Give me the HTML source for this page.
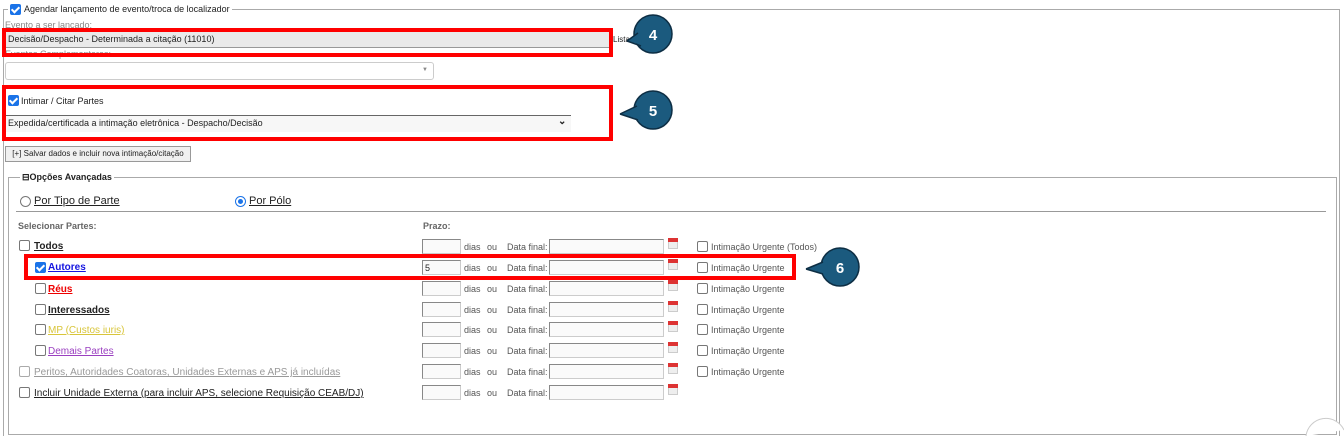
<!DOCTYPE html><html><head><meta charset="utf-8"><style>
html,body{margin:0;width:1344px;height:436px;overflow:hidden}
body{background:#fff;position:relative;font-family:"Liberation Sans",Arial,sans-serif;font-size:9px;color:#222}
.a{position:absolute;white-space:nowrap}
.cb{position:absolute;width:9px;height:9px;border:1px solid #777;border-radius:2px;background:#fff}
.cbk{position:absolute;width:11px;height:11px;border-radius:2px;background:#1a73e8}
.cbk:after{content:"";position:absolute;left:3px;top:1px;width:3px;height:6px;border:solid #fff;border-width:0 2px 2px 0;transform:rotate(45deg)}
.in{position:absolute;height:15px;border:1px solid #ccc;border-top-color:#888;border-left-color:#888;background:#fafafa;box-sizing:border-box}
.red{position:absolute;border:4px solid #f00;box-sizing:border-box}
.cal{position:absolute;width:10px;height:11px;background:#eee;border:1px solid #ccc;box-sizing:border-box}
.cal:before{content:"";position:absolute;left:-1px;top:-1px;width:10px;height:4px;background:#d33}
.g{color:#555}
.u{text-decoration:underline;font-weight:bold;font-size:10px}
</style></head><body>
<div class="a" style="left:3px;top:9px;width:1337px;height:427px;border:1px solid #aaa;border-bottom:none;box-sizing:border-box"></div>
<div class="a" style="left:8px;top:3px;background:#fff;padding:0 2px;width:220px;height:12px"></div>
<div class="cbk" style="left:10px;top:4px"></div>
<div class="a" style="left:24px;top:4px;font-size:9px">Agendar lançamento de evento/troca de localizador</div>
<div class="a" style="left:5px;top:20px;color:#888">Evento a ser lançado:</div>
<div class="a" style="left:5px;top:49px;color:#888">Eventos Complementares:</div>
<div class="in" style="left:5px;top:31px;width:605px;height:17px;background:#eaeaea;border-color:#999"></div>
<div class="a" style="left:8px;top:34px">Decisão/Despacho - Determinada a citação (11010)</div>
<div class="a" style="left:613px;top:35px;font-size:8px">Listar</div>
<div class="in" style="left:5px;top:62px;width:429px;height:18px;background:#fff;border:1px solid #ccc;border-radius:3px"></div>
<div class="a" style="left:422px;top:67px;color:#888;font-size:6px">▼</div>
<div class="cbk" style="left:8px;top:95px"></div>
<div class="a" style="left:21px;top:96px">Intimar / Citar Partes</div>
<div class="a" style="left:5px;top:115px;width:566px;height:16px;border-top:1px solid #666;background:#f7f7f7"></div>
<div class="a" style="left:8px;top:118px">Expedida/certificada a intimação eletrônica - Despacho/Decisão</div>
<div class="a" style="left:558px;top:116px;font-size:10px;font-weight:bold">⌄</div>
<div class="a" style="left:5px;top:146px;width:184px;height:14px;border:1px solid #999;background:#f0f0f0;font-size:8px;line-height:14px;text-align:center">[+] Salvar dados e incluir nova intimação/citação</div>
<div class="a" style="left:8px;top:177px;width:1329px;height:258px;border:1px solid #aaa;box-sizing:border-box"></div>
<div class="a" style="left:20px;top:172px;background:#fff;padding:0 2px;font-weight:bold;font-size:9px">⊟Opções Avançadas</div>
<div class="a" style="left:20px;top:196px;width:9px;height:9px;border:1px solid #777;border-radius:50%"></div>
<div class="a" style="left:34px;top:195px;font-size:11px;text-decoration:underline">Por Tipo de Parte</div>
<div class="a" style="left:235px;top:196px;width:9px;height:9px;border:1px solid #1a73e8;border-radius:50%"></div>
<div class="a" style="left:238px;top:199px;width:5px;height:5px;background:#1a73e8;border-radius:50%"></div>
<div class="a" style="left:249px;top:195px;font-size:11px;text-decoration:underline">Por Pólo</div>
<div class="a" style="left:16px;top:211px;width:1310px;border-top:1px solid #999"></div>
<div class="a g" style="left:18px;top:221px;font-weight:bold;color:#666">Selecionar Partes:</div>
<div class="a" style="left:423px;top:221px;font-weight:bold;color:#666">Prazo:</div>
<div class="cb" style="left:19px;top:240px"></div><div class="a u" style="left:34px;top:241px;color:#222">Todos</div>
<div class="cbk" style="left:35px;top:262px"></div><div class="a u" style="left:48px;top:262px;color:#1515e0">Autores</div>
<div class="cb" style="left:35px;top:283px"></div><div class="a u" style="left:48px;top:284px;color:#e00">Réus</div>
<div class="cb" style="left:35px;top:304px"></div><div class="a u" style="left:48px;top:305px;color:#222">Interessados</div>
<div class="cb" style="left:35px;top:324px"></div><div class="a u" style="left:48px;top:325px;color:#d8c53a;font-weight:normal">MP (Custos iuris)</div>
<div class="cb" style="left:35px;top:345px"></div><div class="a u" style="left:48px;top:346px;color:#9a3fc0;font-weight:normal">Demais Partes</div>
<div class="cb" style="left:19px;top:366px;border-color:#aaa"></div><div class="a u" style="left:34px;top:367px;color:#999;font-weight:normal">Peritos, Autoridades Coatoras, Unidades Externas e APS já incluídas</div>
<div class="cb" style="left:19px;top:387px"></div><div class="a u" style="left:34px;top:388px;color:#222;font-weight:normal">Incluir Unidade Externa (para incluir APS, selecione Requisição CEAB/DJ)</div>
<div id="rows"></div>
<script>
var ys=[239,260,281,302,322,343,364,385],h="";
ys.forEach(function(y,i){h+='<div class="in" style="left:422px;top:'+y+'px;width:39px"></div>'+(i==1?'<div class="a" style="left:425px;top:'+(y+3)+'px">5</div>':'')+
'<div class="a g" style="left:464px;top:'+(y+3)+'px">dias</div><div class="a g" style="left:487px;top:'+(y+3)+'px">ou</div><div class="a g" style="left:507px;top:'+(y+3)+'px">Data final:</div>'+
'<div class="in" style="left:549px;top:'+y+'px;width:115px"></div><div class="cal" style="left:668px;top:'+(y-1)+'px"></div>';
if(i<7)h+='<div class="cb" style="left:697px;top:'+(y+2)+'px"></div><div class="a g" style="left:711px;top:'+(y+3)+'px">Intimação Urgente'+(i==0?' (Todos)':'')+'</div>';});
document.getElementById('rows').innerHTML=h;
</script>
<div class="red" style="left:2px;top:28px;width:611px;height:29px"></div>
<div class="red" style="left:2px;top:85px;width:611px;height:56px"></div>
<div class="red" style="left:24px;top:254px;width:772px;height:26px"></div>
<svg class="a" style="left:0;top:0" width="1344" height="436">
<g fill="#1b5a7e" stroke="#0d2e44" stroke-width="1.5">
<circle cx="653" cy="34" r="19"/><polygon points="627,41 640,32 642,45" stroke="none"/>
<path d="M627 41 L638 33 M627 41 L641 46" fill="none"/>
<circle cx="653" cy="110" r="19"/><polygon points="620,114 640,105 641,120" stroke="none"/>
<path d="M620 114 L637 106 M620 114 L638 120" fill="none"/>
<circle cx="840" cy="267" r="19"/><polygon points="806,269 827,260 828,275" stroke="none"/>
<path d="M806 269 L823 262 M806 269 L823 274" fill="none"/>
</g>
<g fill="#fff" font-family="Liberation Sans" font-weight="bold" font-size="15" text-anchor="middle">
<text x="653" y="40">4</text><text x="653" y="116">5</text><text x="840" y="273">6</text></g>
<path d="M1306 436 A20 20 0 0 1 1344 430" fill="#fff" stroke="#ccc"/>
</svg>
</body></html>
